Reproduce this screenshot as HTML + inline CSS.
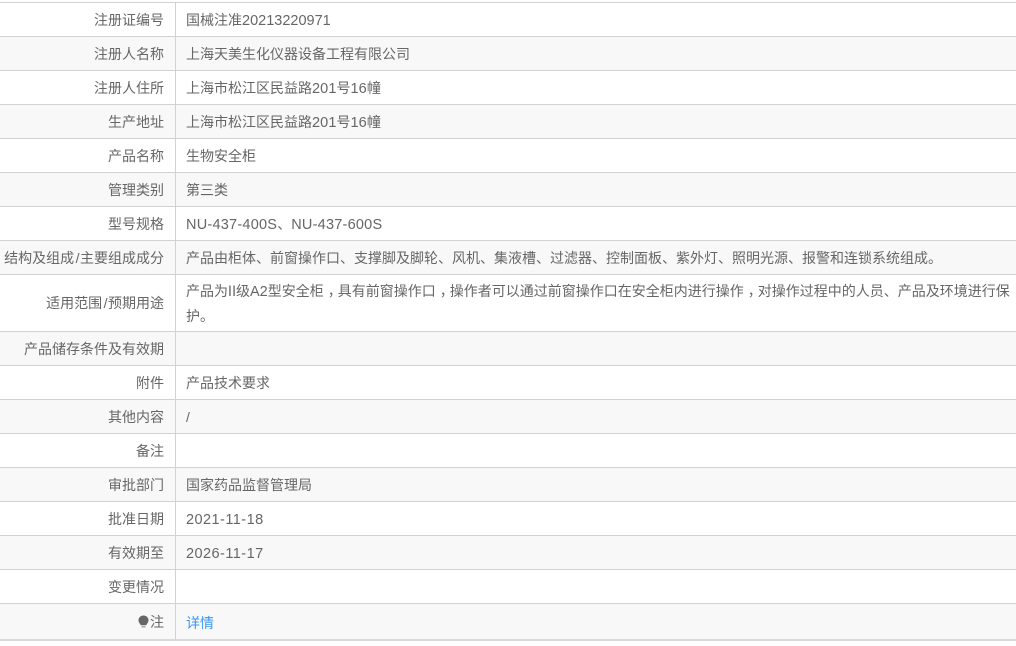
<!DOCTYPE html>
<html lang="zh">
<head>
<meta charset="utf-8">
<style>
html,body{margin:0;padding:0;width:1016px;height:646px;overflow:hidden;background:#fff}
body{font-family:"Liberation Sans","Microsoft YaHei","Noto Sans CJK SC",sans-serif;font-size:14px;color:#666;position:relative}
.r{position:absolute;left:0;width:1016px;border-top:1px solid #d2d2d2;box-sizing:border-box}
.r.e{background:#f8f8f8}
.l{position:absolute;left:0;top:0;bottom:0;width:176px;border-right:1px solid #d2d2d2;box-sizing:border-box;display:flex;align-items:center;justify-content:flex-end;padding-right:11px;white-space:nowrap}
.v{position:absolute;left:186px;top:0;bottom:0;width:830px;display:flex;align-items:center;white-space:nowrap}
.v.m{display:block;white-space:normal;line-height:24px;top:4px;bottom:auto}
a{color:#3a96f5;text-decoration:none;position:relative;top:1px}
.s{margin:0 .5px 0 1.5px}
.d{font-size:14.5px}
.n{font-size:14.5px;letter-spacing:.23px}
.t{font-size:14.5px;letter-spacing:.45px;position:relative;top:1px}
.a{font-size:14.5px;letter-spacing:.1px}
.c{position:relative;left:4px;top:0}
.ii{display:inline-block;width:14px;margin:0 -3px}
</style>
</head>
<body>
<div class="r" style="top:2px;height:34px"><div class="l">注册证编号</div><div class="v"><span>国械注准<span class="d">20213220971</span></span></div></div>
<div class="r e" style="top:36px;height:34px"><div class="l">注册人名称</div><div class="v">上海天美生化仪器设备工程有限公司</div></div>
<div class="r" style="top:70px;height:34px"><div class="l">注册人住所</div><div class="v"><span>上海市松江区民益路<span class="a">201</span>号<span class="a">16</span>幢</span></div></div>
<div class="r e" style="top:104px;height:34px"><div class="l">生产地址</div><div class="v"><span>上海市松江区民益路<span class="a">201</span>号<span class="a">16</span>幢</span></div></div>
<div class="r" style="top:138px;height:34px"><div class="l">产品名称</div><div class="v">生物安全柜</div></div>
<div class="r e" style="top:172px;height:34px"><div class="l">管理类别</div><div class="v">第三类</div></div>
<div class="r" style="top:206px;height:34px"><div class="l">型号规格</div><div class="v"><span><span class="n">NU-437-400S</span>、<span class="n">NU-437-600S</span></span></div></div>
<div class="r e" style="top:240px;height:34px"><div class="l"><span>结构及组成<span class="s">/</span>主要组成成分</span></div><div class="v">产品由柜体、前窗操作口、支撑脚及脚轮、风机、集液槽、过滤器、控制面板、紫外灯、照明光源、报警和连锁系统组成。</div></div>
<div class="r" style="top:274px;height:57px"><div class="l"><span>适用范围<span class="s">/</span>预期用途</span></div><div class="v m">产品为<span class="ii">Ⅱ</span>级<span class="d">A2</span>型安全柜<span class="c">，</span>具有前窗操作口<span class="c">，</span>操作者可以通过前窗操作口在安全柜内进行操作<span class="c">，</span>对操作过程中的人员、产品及环境进行保护。</div></div>
<div class="r e" style="top:331px;height:34px"><div class="l">产品储存条件及有效期</div><div class="v"></div></div>
<div class="r" style="top:365px;height:34px"><div class="l">附件</div><div class="v">产品技术要求</div></div>
<div class="r e" style="top:399px;height:34px"><div class="l">其他内容</div><div class="v">/</div></div>
<div class="r" style="top:433px;height:34px"><div class="l">备注</div><div class="v"></div></div>
<div class="r e" style="top:467px;height:34px"><div class="l">审批部门</div><div class="v">国家药品监督管理局</div></div>
<div class="r" style="top:501px;height:34px"><div class="l">批准日期</div><div class="v"><span class="t">2021-11-18</span></div></div>
<div class="r e" style="top:535px;height:34px"><div class="l">有效期至</div><div class="v"><span class="t">2026-11-17</span></div></div>
<div class="r" style="top:569px;height:34px"><div class="l">变更情况</div><div class="v"></div></div>
<div class="r e" style="top:603px;height:38px;border-bottom:2px solid #d9d9d9"><div class="l"><svg width="11" height="14" viewBox="0 0 11 14" style="margin-right:1px"><path d="M5.500 .5C2.700 .5 .5 2.600 .5 5.200c0 2 1.400 3.200 2.300 5h5.400c.9-1.800 2.300-3 2.300-5C10.500 2.600 8.300 .5 5.500 .5z" fill="#666"/><rect x="3.500" y="11" width="4" height="1.500" fill="#aaa"/></svg>注</div><div class="v"><a>详情</a></div></div>
</body>
</html>
